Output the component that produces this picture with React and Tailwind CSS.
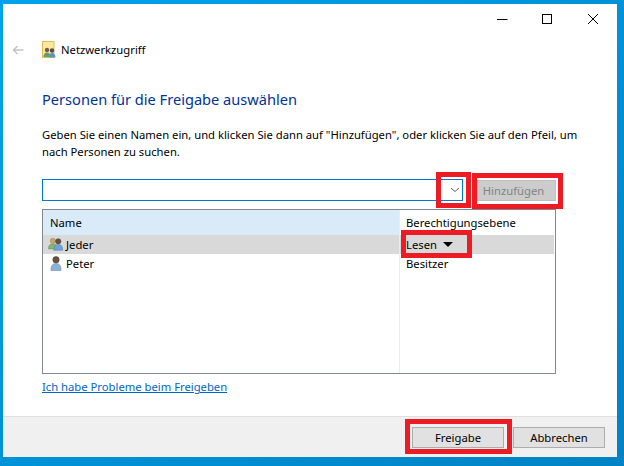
import React from "react";

const GroupIcon = ({ className }) => (
  <svg viewBox="0 0 18 15" className={className}>
    <circle cx="5.500" cy="4" r="3" fill="#c9a26d" stroke="#a5814f" strokeWidth="0.500" />
    <path d="M0.500 13c0-4 1.500-5.500 5-5.500S10.500 9 10.500 13z" fill="#85b46f" stroke="#5f8f4f" strokeWidth="0.500" />
    <circle cx="11.500" cy="4.500" r="3" fill="#5f5043" stroke="#40352c" strokeWidth="0.500" />
    <path d="M6.500 14.500c0-4.500 1.500-6.500 5-6.500s5 2 5 6.500z" fill="#6fa3d6" stroke="#3f74a8" strokeWidth="0.500" />
  </svg>
);

const PersonIcon = ({ className }) => (
  <svg viewBox="0 0 12 15" className={className}>
    <circle cx="6" cy="3.700" r="3.200" fill="#6b5240" stroke="#46352a" strokeWidth="0.500" />
    <path d="M1 14.500c0-5 1.500-7 5-7s5 2 5 7z" fill="#8cb2d6" stroke="#587ea3" strokeWidth="0.500" />
  </svg>
);

const SharingIcon = ({ className }) => (
  <svg viewBox="0 0 14 17" className={className}>
    <rect x="0.500" y="0.500" width="11.500" height="16" fill="#fbe7a0" stroke="#e0bd4f" />
    <circle cx="5" cy="9" r="2.200" fill="#7a5c42" />
    <path d="M1.500 16c0-3 1.200-4.500 3.500-4.500S8.500 13 8.500 16z" fill="#5f9e6e" />
    <circle cx="10" cy="9.500" r="2.200" fill="#4d4d4d" />
    <path d="M7 16.500c0-3 1-4.500 3-4.500s3.500 1.500 3.500 4.500z" fill="#5b93c9" />
  </svg>
);

const App = () => {
  return (
    <div
      className="relative w-[624px] h-[466px] overflow-hidden pl-[3px] pt-[4px] bg-gradient-to-br from-[#00a2ed] to-[#0083c4] text-[11.25px] leading-[17px] text-black"
      style={{ fontFamily: '"Noto Sans", sans-serif' }}
    >
      <div className="w-[614px] h-[453px] bg-white flex flex-col">
        {/* title bar */}
        <div className="h-[30px] flex justify-end items-center">
          <svg viewBox="0 0 110 11" className="w-[110px] h-[11px] mr-[10px]">
            <path d="M0 5.500h10.500" stroke="#000" fill="none" />
            <rect x="45.500" y="0.500" width="9" height="9" stroke="#000" fill="none" />
            <path d="M91 0l10 10M101 0l-10 10" stroke="#000" fill="none" />
          </svg>
        </div>

        {/* nav row */}
        <div className="h-[31px] flex items-center pl-[9px]">
          <svg viewBox="0 0 12 10" className="w-[12px] h-[10px]">
            <path d="M11.500 5h-10M5.500 1L1.500 5l4 4" stroke="#c4c4c4" strokeWidth="1.500" fill="none" />
          </svg>
          <SharingIcon className="w-[14px] h-[17px] ml-[18px]" />
          <span className="ml-[5px]">Netzwerkzugriff</span>
        </div>

        <div className="flex-1 pl-[39px] pr-[61px]">
          <h1 className="mt-[22px] text-[14.6px] leading-[24px] text-[#003399]">Personen für die Freigabe auswählen</h1>
          <p className="mt-[15px] w-[550px]">
            Geben Sie einen Namen ein, und klicken Sie dann auf "Hinzufügen", oder klicken Sie auf den Pfeil, um nach Personen zu suchen.
          </p>

          <div className="mt-[19px] flex items-center">
            <div className="w-[421px] h-[22px] border border-[#0078d7] flex items-center justify-end pr-[3px]">
              <svg viewBox="0 0 8 4" className="w-[8px] h-[4px]">
                <path d="M0 0L4 3.500L8 0" stroke="#606060" fill="none" />
              </svg>
            </div>
            <button className="ml-[14px] w-[79px] h-[21px] pr-[6px] bg-[#cccccc] border border-[#bfbfbf] text-[#838383]">Hinzufügen</button>
          </div>

          <div className="mt-[8px] w-[514px] h-[165px] border border-[#828790] flex">
            <div className="w-[357px] border-r border-[#e3eef8]">
              <div className="h-[25px] bg-[#d9ebf9] flex items-center pl-[7px]">Name</div>
              <div className="h-[19px] bg-[#d9d9d9] flex items-center pl-[5px] pb-[1px]">
                <GroupIcon className="w-[16px] h-[14px]" />
                <span className="ml-[2px]">Jeder</span>
              </div>
              <div className="h-[20px] flex items-center pl-[7px] pb-[1px]">
                <PersonIcon className="w-[12px] h-[15px]" />
                <span className="ml-[4px]">Peter</span>
              </div>
            </div>
            <div className="flex-1 pr-[1px]">
              <div className="h-[25px] flex items-center pl-[6px]">Berechtigungsebene</div>
              <div className="h-[19px] bg-[#d9d9d9] flex items-center pl-[6px] pb-[1px]">
                Lesen
                <svg viewBox="0 0 10 5" className="w-[10px] h-[5px] ml-[6px]">
                  <path d="M0 0h10L5 5z" fill="#000" />
                </svg>
              </div>
              <div className="h-[20px] flex items-center pl-[6px] pb-[1px]">Besitzer</div>
            </div>
          </div>

          <a className="mt-[4px] block w-fit text-[#0066cc] underline">Ich habe Probleme beim Freigeben</a>
        </div>

        {/* footer */}
        <div className="h-[41px] bg-[#f0f0f0] border-t border-[#dfdfdf] flex justify-end items-center gap-[9px] pr-[12px] pt-[1px]">
          <button className="w-[92px] h-[21px] bg-[#e1e1e1] border border-[#adadad]">Freigabe</button>
          <button className="w-[92px] h-[21px] bg-[#e1e1e1] border border-[#adadad]">Abbrechen</button>
        </div>
      </div>

      {/* red annotation boxes */}
      <div className="absolute left-[436px] top-[172px] w-[35px] h-[36px] border-[5px] border-[#ed1c24]" />
      <div className="absolute left-[472px] top-[173px] w-[91px] h-[36px] border-[5px] border-[#ed1c24]" />
      <div className="absolute left-[401px] top-[230px] w-[71px] h-[28px] border-[5px] border-[#ed1c24]" />
      <div className="absolute left-[405px] top-[419px] w-[107px] h-[35px] border-[5px] border-[#ed1c24]" />
    </div>
  );
};

export default App;
